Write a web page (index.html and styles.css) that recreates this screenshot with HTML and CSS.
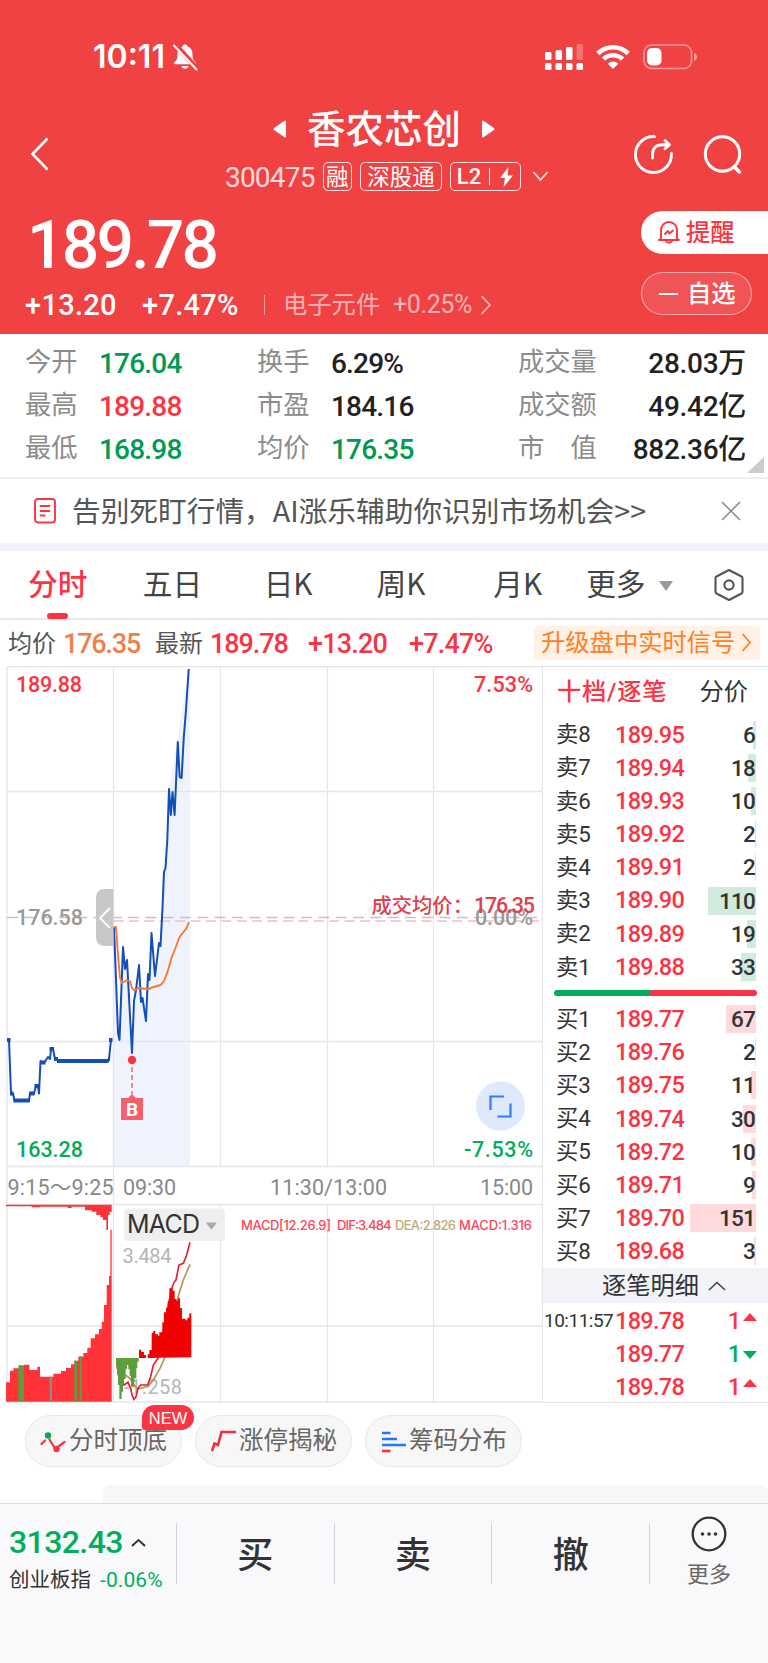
FILE: index.html
```html
<!DOCTYPE html>
<html lang="zh-CN">
<head>
  <meta charset="UTF-8" />
  <meta name="viewport" content="width=device-width, initial-scale=1.0"/>
  <title>香农芯创 300475</title>
  <link rel="stylesheet" href="styles.css">
</head>
<body>
  <header class="header">
    <div class="status">
      <span class="clock">10:11</span>
      <svg class="mute" width="28" height="28" viewBox="0 0 28 28">
        <path d="M14 1.500c1.500 0 2.300.8 2.500 2 3.300 1 5 3.800 5 7.500 0 5 1 6.500 3.200 8.500.7.700.3 1.800-.8 1.800H4.100c-1.100 0-1.500-1.100-.8-1.800C5.500 17.500 6.500 16 6.500 11c0-3.700 1.700-6.500 5-7.500.2-1.200 1-2 2.500-2zM10.500 23h7c-.3 1.800-1.600 2.800-3.500 2.800s-3.200-1-3.500-2.800z" fill="#fff"/>
        <path d="M4 1l22.500 25" stroke="#f04143" stroke-width="5"/>
        <path d="M3 2.500l22.500 24" stroke="#fff" stroke-width="2" stroke-linecap="round"/>
      </svg>
      <svg class="signal" width="38" height="26" viewBox="0 0 38 26" fill="#fff">
        <rect x="0" y="8" width="6.500" height="8" rx="1.500"/><rect x="10.500" y="6" width="6.500" height="10" rx="1.500"/>
        <rect x="21" y="3" width="6.500" height="13" rx="1.500"/><rect x="31.500" y="0" width="6.500" height="16" rx="1.500" opacity=".25"/>
        <rect x="0" y="19" width="6.500" height="7" rx="1.500"/><rect x="10.500" y="19" width="6.500" height="7" rx="1.500"/>
        <rect x="21" y="19" width="6.500" height="7" rx="1.500"/><rect x="31.500" y="19" width="6.500" height="7" rx="1.500"/>
      </svg>
      <svg class="wifi" width="34" height="26" viewBox="0 0 34 26" fill="none" stroke="#fff" stroke-width="4.600">
        <path d="M1.800 9.500a21.500 21.500 0 0 1 30.400 0M7.500 15.200a13.500 13.500 0 0 1 19 0"/>
        <path d="M17 25l-5.200-5.300a7.400 7.400 0 0 1 10.400 0z" fill="#fff" stroke="none"/>
      </svg>
      <svg class="battery" width="55" height="26" viewBox="0 0 55 26">
        <rect x="1" y="1" width="47.500" height="23.500" rx="7.500" fill="none" stroke="#fff" stroke-opacity=".45" stroke-width="1.600"/>
        <rect x="4" y="4" width="14.500" height="17.500" rx="5" fill="#fff"/>
        <path d="M51 9v8q3-1.200 3-4t-3-4z" fill="#fff" opacity=".5"/>
      </svg>
    </div>

    <div class="nav">
      <svg class="back" width="20" height="36" viewBox="0 0 20 36" fill="none" stroke="#fff" stroke-width="2.600"><path d="M17.500 2.500L2.500 18l15 15.500"/></svg>
      <div class="stock">
        <div class="stock-name">
          <svg width="14" height="20" viewBox="0 0 14 18" preserveAspectRatio="none"><path d="M13 2v14q-.5 1-1.500.4L1 9.800Q0 9 1 8.200L11.500 1.600q1-.6 1.500.4z" fill="#fff"/></svg>
          <h1>香农芯创</h1>
          <svg width="14" height="20" viewBox="0 0 14 18" preserveAspectRatio="none"><path d="M1 2v14q.5 1 1.500.4L13 9.800q1-.8 0-1.600L2.500 1.600Q1.500 1 1 2z" fill="#fff"/></svg>
        </div>
        <div class="stock-code">
          <span class="code">300475</span>
          <span class="tag">融</span>
          <span class="tag wide">深股通</span>
          <span class="tag l2">L2<i></i><svg width="15" height="20" viewBox="0 0 15 20"><path d="M9.500 0L1 11h5L4.500 20 14 8.500H8.500z" fill="#fff"/></svg></span>
          <svg class="down" width="17" height="11" viewBox="0 0 17 11" fill="none" stroke="#fff" stroke-opacity=".85" stroke-width="1.600"><path d="M1.500 1L8.500 9l7-8"/></svg>
        </div>
      </div>
      <div class="tools">
        <svg width="40" height="40" viewBox="0 0 40 40" fill="none" stroke="#fff" stroke-width="2.900" stroke-linecap="round" stroke-linejoin="round">
          <path d="M21.500 2.600A18 18 0 1 0 38.400 19.500"/><path d="M19.500 24v-3c0-7 3.500-10.300 10-10.300h5M32 6.500l4.500 4.200-4.500 4"/>
        </svg>
        <svg width="40" height="40" viewBox="0 0 40 40" fill="none" stroke="#fff" stroke-width="3" stroke-linecap="round">
          <circle cx="19.500" cy="20" r="17.200"/><path d="M31.500 33l4.800 5" stroke-width="3.600"/>
        </svg>
      </div>
    </div>

    <div class="quote">
      <div class="quote-left">
        <div class="price">189.78</div>
        <div class="change">
          <b>+13.20</b><b class="pct">+7.47%</b><i></i>
          <span class="sector">电子元件</span><span class="sector-pct">+0.25%</span>
          <svg width="12" height="20" viewBox="0 0 12 20" fill="none" stroke="#fff" stroke-opacity=".65" stroke-width="1.700"><path d="M1.500 1l8.500 9-8.500 9"/></svg>
        </div>
      </div>
      <div class="quote-right">
        <div class="remind">
          <svg width="24" height="25" viewBox="0 0 24 25" fill="none" stroke="#fb3444" stroke-width="1.900" stroke-linejoin="round" stroke-linecap="round">
            <path d="M4 18.500V10a8 8 0 0 1 16 0v8.500l2 1.500H2zM8.500 20.500q3.500 4.500 7 0"/><path d="M8 14l3-3 1.500 2.500 3.500-3"/>
          </svg>
          提醒
        </div>
        <div class="favor"><i></i>自选</div>
      </div>
    </div>
  </header>

  <section class="stats">
    <div class="stat"><span>今开</span><b class="green">176.04</b></div>
    <div class="stat"><span>换手</span><b>6.29%</b></div>
    <div class="stat last"><span>成交量</span><b>28.03万</b></div>
    <div class="stat"><span>最高</span><b class="red">189.88</b></div>
    <div class="stat"><span>市盈</span><b>184.16</b></div>
    <div class="stat last"><span>成交额</span><b>49.42亿</b></div>
    <div class="stat"><span>最低</span><b class="green">168.98</b></div>
    <div class="stat"><span>均价</span><b class="green">176.35</b></div>
    <div class="stat last"><span>市　值</span><b>882.36亿</b></div>
  </section>

  <section class="notice">
    <svg width="22" height="26" viewBox="0 0 22 26" fill="none" stroke="#fb3444" stroke-width="1.900" stroke-linecap="round">
      <rect x="1" y="1" width="20" height="23.500" rx="3"/><path d="M6.500 8h9M6.500 13h9M6.500 17.500h4"/>
    </svg>
    <p>告别死盯行情，AI涨乐辅助你识别市场机会&gt;&gt;</p>
    <svg class="close" width="20" height="20" viewBox="0 0 20 20" stroke="#888" stroke-width="1.500"><path d="M1 1l18 18M19 1L1 19"/></svg>
  </section>

  <nav class="tabs">
    <a class="active">分时</a>
    <a>五日</a>
    <a>日K</a>
    <a>周K</a>
    <a>月K</a>
    <a class="more">更多<i></i></a>
    <svg width="32" height="34" viewBox="0 0 32 34" fill="none" stroke="#555" stroke-width="2.100" stroke-linejoin="round">
      <path d="M16 2l12.500 6.500q1 .6 1 1.700v13.600q0 1.100-1 1.700L16 32 3.500 25.500q-1-.6-1-1.700V10.200q0-1.100 1-1.700z"/><circle cx="16" cy="17" r="4.600"/>
    </svg>
  </nav>

  <section class="info">
    <span>均价</span><b class="orange">176.35</b>
    <span class="latest">最新</span><b>189.78</b><b class="diff">+13.20</b><b class="diff">+7.47%</b>
    <a class="upgrade">升级盘中实时信号<svg width="11" height="19" viewBox="0 0 11 19" fill="none" stroke="#ff8022" stroke-width="1.800"><path d="M1.500 1l7.500 8.500L1.500 18"/></svg></a>
  </section>

  <main class="market">
    <svg class="chart" width="543" height="737" viewBox="0 666 543 737">
      <path class="area" d="M113.500 927L118 1033l1.500 7 3.500-93 2 22 2-9 5 93 2-52 2-11 3-25 2 37 1.500-4 3.500 23 2-47 1.500 6 2-47 3.500 43 4-33 1.500 2 3-65L164 872l1.500-4 1.800-28 1.700-51 20-120h1v497H113.500z"/>
      <!-- grid -->
      <g class="grid">
        <path d="M7 666.500h536M7 791.500h535M7 1041.500h535M7 1166.500h535M7 1204.500h535M7 1326h535M7 1402h536"/>
        <path d="M7 666v736M113.500 666v736M220.500 666v500M327.500 666v500M433.500 666v500M542.500 666v736M220.500 1204v198M327.500 1204v198M433.500 1204v198"/>
      </g>
      <path d="M7 917.500h535" stroke="#b9c6d6" stroke-width="1.300" stroke-dasharray="11 6.300"/>
      <path d="M113.500 921h428" stroke="#fbc9d0" stroke-width="1.800" stroke-dasharray="10 5.400"/>

      <text class="up" x="16" y="692.400" textLength="66">189.88</text>
      <text class="up" x="474" y="692.400" textLength="59">7.53%</text>
      <text class="flat" x="16" y="925.300" textLength="67">176.58</text>
      <text class="flat" x="475" y="925.300" textLength="58">0.00%</text>
      <text class="down" x="16" y="1157" textLength="67">163.28</text>
      <text class="down" x="464" y="1157" textLength="69">-7.53%</text>
      <text class="avg" x="371.500" y="913">成交均价：</text>
      <text class="avg num" x="474" y="912.500" textLength="61">176.35</text>

      <!-- call auction + minute line -->
      <path class="line" d="M7 1040h2l2 53.500h2l1.500 7H29l1-7h4l2-7.500h2l1 7.500 1.500-32.500 3.500 2 2-3 2-3 2 2 1-10h2l2 10 3 2h50l1-2 2-19"/>
      <path class="line dots" d="M13.500 1100.500H30M57 1061h51.500M49.500 1049h4.500M29 1093.500h5.500M34.500 1086h4.500M40 1062.500h5.500M7 1040h3.500M10 1093.500h3.500M54 1059h4M108 1059h2M109 1040h3.500"/>
      <path class="line" d="M114 927l4 106 1.500 7 3.500-93 2 22 2-9 5 93 2-52 2-11 3-25 2 37 1.500-4 3.500 23 2-47 1.500 6 2-47 3.500 43 4-33 1.500 3 2-38L164 872l1.500-4 1.800-28 1.700-51 1.800 26 1.700-23 2.100 23 3.200-73 1.800 35 2 1 2.200-41 2.200-27 2.700-41"/>
      <path class="avg-line" d="M114 927h2l2 28 2 23 2 5 5-3 3 1.500 2 6.500 2.500 2.500 4-2.500 10 1 5-2 7-2 3-3 4-10 4-14 4-10 4-11 4-5 3-4 2.500-6"/>

      <!-- buy marker -->
      <circle cx="132" cy="1060" r="4.200" fill="#fb3444"/>
      <path d="M132 1067v27" stroke="#f5606d" stroke-width="1.500" stroke-dasharray="5 3"/>
      <path d="M121 1098h7l4-4 4 4h7v22h-22z" fill="#f5606d"/>
      <text class="mark" x="132" y="1116">B</text>

      <path d="M113.500 889H105q-9 0-9 9v39q0 9 9 9h8.500z" fill="#c8c8c8"/>
      <path d="M110 908l-10 10 10 10" fill="none" stroke="#fff" stroke-width="1.800"/>

      <circle cx="500.500" cy="1106" r="24.500" fill="#dee9fd"/>
      <path d="M490.500 1110v-13.500H504M510.500 1103.500v13H497.500" fill="none" stroke="#2f7cff" stroke-width="2.200"/>

      <text class="axis" x="7.500" y="1194.500" textLength="106">9:15～9:25</text>
      <text class="axis" x="123" y="1194.500" textLength="53">09:30</text>
      <text class="axis" x="270" y="1194.500" textLength="117">11:30/13:00</text>
      <text class="axis" x="480" y="1194.500" textLength="53">15:00</text>

      <!-- auction volume -->
      <g transform="translate(0 1195) scale(.33333)">
        <path fill="#ff3338" d="M18 620V562H30V527H40V520H57V514H72V509H88V525H112V515H120V545H160V536H183V528H198V519H213V508H223V497H235V485H250V474H262V458H272V430H285V418H297V402H305V380H312V330H320V270H327V243H331V104H335V620z"/>
        <path fill="#ff3338" d="M18 29h317v22h-6v9h-5v45h-5V75h-10v-8h-8v-7h-12V50h-14v-4h-20V35h-40v4h-12v-4H120v2H95v-3H18z"/>
        <path fill="#5d9e3c" d="M55 511h17v109H55zM223 497h8v123h-8zM239 484h7v136h-7zM57 30h15v4H57zM238 30h8v4h-8z"/>
        <path fill="#8a8a8a" d="M149 545h7v75h-7z"/>
      </g>

      <rect x="124" y="1208.500" width="101" height="32.500" rx="4" fill="#efefef"/>
      <text class="macd" x="127" y="1232.500" textLength="73">MACD</text>
      <path d="M207 1222.500h9q1 0 .3 1L212 1229q-.5.600-1 0l-4.600-5.500q-.5-1 .6-1z" fill="#aaa"/>
      <text class="scale" x="122.500" y="1263" textLength="49">3.484</text>
      <text class="scale" x="124" y="1394" textLength="58">-1.258</text>
      <g class="legend">
        <text x="241" y="1230" textLength="90">MACD[12.26.9]</text>
        <text x="337" y="1230" textLength="54.500">DIF:3.484</text>
        <text class="dea" x="395" y="1230" textLength="61">DEA:2.826</text>
        <text x="459" y="1230" textLength="73">MACD:1.316</text>
      </g>

      <!-- macd -->
      <g transform="translate(0 1195) scale(.33333)">
        <path fill="none" stroke="#b4935a" stroke-width="5" d="M376 540l14 10 10 18 12 14 33-8 15-19 20-35 14-31 39-179 17-55 20-47"/>
        <path fill="none" stroke="#e2222e" stroke-width="5" d="M351 512l9 55 12 3 12-8 8 18 4 20 6 13 6-8 6-25 8-10h21l9-25 8-35 14-20 40-205 8-23 6-7 9-45 13-5 10-25 10-38"/>
        <path fill="#5d9e3c" d="M348 489v25h3v26h3v30h4v42h7v-22h4v-22h3v-16h5v-30h4v-12h4v13h4v20h4v32h10v-25h6v-30h3v-20h4v-11z"/>
        <path fill="#ee0202" d="M417 489v-25h7v7h8v9h6v9h5v-11h5v-13h7v-52h5v-5h6v10h8v4h4v-10h9v-30h5v-30h6v-14h5v-20h5v-38h10v7h6v25h5v5h5v-7h6v29h6v32h11v5h5v-8h6v-13h6v132z"/>
      </g>
    </svg>

    <aside class="book">
      <div class="book-head"><b>十档/逐笔</b><span>分价</span></div>
      <div class="orders sell">
        <div class="order"><span>卖8</span><b>189.95</b><em><i style="width:3px"></i>6</em></div>
        <div class="order"><span>卖7</span><b>189.94</b><em><i style="width:8px"></i>18</em></div>
        <div class="order"><span>卖6</span><b>189.93</b><em><i style="width:5px"></i>10</em></div>
        <div class="order"><span>卖5</span><b>189.92</b><em><i style="width:1px"></i>2</em></div>
        <div class="order"><span>卖4</span><b>189.91</b><em><i style="width:1px"></i>2</em></div>
        <div class="order"><span>卖3</span><b>189.90</b><em><i style="width:48px"></i>110</em></div>
        <div class="order"><span>卖2</span><b>189.89</b><em><i style="width:9px"></i>19</em></div>
        <div class="order"><span>卖1</span><b>189.88</b><em><i style="width:15px"></i>33</em></div>
      </div>
      <div class="ratio"></div>
      <div class="orders buy">
        <div class="order"><span>买1</span><b>189.77</b><em><i style="width:30px"></i>67</em></div>
        <div class="order"><span>买2</span><b>189.76</b><em><i style="width:1px"></i>2</em></div>
        <div class="order"><span>买3</span><b>189.75</b><em><i style="width:5px"></i>11</em></div>
        <div class="order"><span>买4</span><b>189.74</b><em><i style="width:13px"></i>30</em></div>
        <div class="order"><span>买5</span><b>189.72</b><em><i style="width:5px"></i>10</em></div>
        <div class="order"><span>买6</span><b>189.71</b><em><i style="width:4px"></i>9</em></div>
        <div class="order"><span>买7</span><b>189.70</b><em><i style="width:66px"></i>151</em></div>
        <div class="order"><span>买8</span><b>189.68</b><em><i style="width:2px"></i>3</em></div>
      </div>
      <div class="ticks-head">逐笔明细<svg width="18" height="10" viewBox="0 0 18 10" fill="none" stroke="#444" stroke-width="1.600"><path d="M1 9l8-7.500L17 9"/></svg></div>
      <div class="tick"><time>10:11:57</time><b>189.78</b><em>1</em><i></i></div>
      <div class="tick fall"><time></time><b>189.77</b><em>1</em><i></i></div>
      <div class="tick"><time></time><b>189.78</b><em>1</em><i></i></div>
    </aside>
  </main>

  <section class="chips">
    <a class="chip">
      <svg width="27" height="24" viewBox="0 0 27 24" fill="none" stroke="#fb3444" stroke-width="2.300" stroke-linecap="round"><path d="M1.500 15l3.500-3.500M9.500 10.500l5 8M19 17l5.500-4"/><circle cx="8" cy="6.500" r="3.200" fill="#0aa858" stroke="none"/><circle cx="16.500" cy="20" r="3.200" fill="#fb3444" stroke="none"/></svg>
      分时顶底
      <span class="new">NEW</span>
    </a>
    <a class="chip">
      <svg width="27" height="24" viewBox="0 0 27 24" fill="none" stroke="#f0303f" stroke-width="2.600"><path d="M2 22l2.500-7.500L8 16l3.500-13H26"/></svg>
      涨停揭秘
    </a>
    <a class="chip">
      <svg width="27" height="24" viewBox="0 0 27 24" stroke="#2476ff" stroke-width="2.700"><path d="M2 4h8.500M2 10h15M2 16h24"/><path d="M2 22h8.500" stroke="#fb3444"/></svg>
      筹码分布
    </a>
  </section>
  <div class="peek"></div>

  <footer class="bar">
    <div class="index">
      <div class="index-value">3132.43<svg width="15" height="9" viewBox="0 0 15 9" fill="none" stroke="#333" stroke-width="2"><path d="M1 8l6.500-6L14 8"/></svg></div>
      <div class="index-name">创业板指<span>-0.06%</span></div>
    </div>
    <a class="trade">买</a>
    <a class="trade">卖</a>
    <a class="trade">撤</a>
    <a class="more-btn">
      <svg width="36" height="36" viewBox="0 0 36 36"><circle cx="18" cy="18" r="16.300" fill="none" stroke="#333" stroke-width="2.300"/><g fill="#333"><circle cx="11.500" cy="18" r="1.800"/><circle cx="18" cy="18" r="1.800"/><circle cx="24.500" cy="18" r="1.800"/></g></svg>
      更多
    </a>
  </footer>
</body>
</html>
```

FILE: styles.css
```css
* {
  margin: 0;
  padding: 0;
  box-sizing: border-box;
}

body {
  width: 768px;
  height: 1663px;
  overflow: hidden;
  background: #fff;
  color: #333;
  font-family: Roboto, "Noto Sans CJK SC", sans-serif;
  line-height: 1.2;
}

svg {
  display: block;
  flex: none;
}

i, em {
  font-style: normal;
}

b {
  font-weight: 500;
}

.red { color: #fb3444; }
.green { color: #009a50; }
.orange { color: #f0804a; }

/* header */
.header {
  height: 334px;
  background: #f04143;
  color: #fff;
}

.status {
  display: flex;
  align-items: center;
  height: 102px;
  padding: 12px 70px 0 93px;
}

.clock {
  padding-top: 1px;
  font-family: Inter, sans-serif;
  font-size: 32px;
  font-weight: 600;
}

.mute { margin: 0 auto 0 6px; }
.wifi { margin: 0 13px; }

.nav {
  display: grid;
  grid-template-columns: 225px 324px 1fr;
  height: 96px;
}

.back { margin: 34px 0 0 30px; }

.stock-name {
  display: flex;
  align-items: center;
  justify-content: center;
  gap: 20px;
  height: 54px;
  padding-right: 6px;
}

h1 {
  padding-top: 1px;
  font-size: 38.5px;
  font-weight: 500;
  line-height: 54px;
}

.stock-code {
  display: flex;
  align-items: center;
  height: 41px;
  white-space: nowrap;
}

.code {
  padding-top: 2px;
  width: 99px;
  font-size: 28px;
  letter-spacing: -0.8px;
  opacity: .8;
}

.tag {
  display: flex;
  align-items: center;
  justify-content: center;
  width: 30px;
  height: 29px;
  margin-right: 8px;
  border: 1.5px solid rgba(255, 255, 255, .85);
  border-radius: 5px;
  font-size: 22.5px;
  line-height: 26px;
}

.tag.wide { width: 83px; }

.tag.l2 {
  width: 72px;
  margin-right: 11px;
  font-size: 22px;
  font-weight: 500;
}

.l2 i {
  width: 1px;
  height: 17px;
  margin: 0 9px 0 8px;
  background: #fff;
}

.tools {
  display: flex;
  gap: 30px;
  padding: 32px 0 0 84px;
}

.quote {
  display: flex;
  justify-content: space-between;
}

.quote-left { padding-left: 25px; }

.price {
  height: 91px;
  padding: 1px 0 0 2px;
  font-size: 66px;
  font-weight: 500;
  line-height: 93px;
  letter-spacing: -2.8px;
}

.change {
  display: flex;
  align-items: center;
  height: 32px;
  font-size: 29px;
  white-space: nowrap;
}

.change b {
  width: 117px;
  letter-spacing: 0.3px;
}

.change .pct { width: 122px; }

.change i {
  width: 1px;
  height: 20px;
  margin-right: 18px;
  background: rgba(255, 255, 255, .5);
}

.sector {
  width: 110px;
  font-size: 24.3px;
  opacity: .6;
}

.sector-pct {
  width: 87px;
  font-size: 25px;
  letter-spacing: -0.4px;
  opacity: .6;
}

.quote-right {
  width: 127px;
  padding-top: 13px;
}

.remind, .favor {
  display: flex;
  align-items: center;
  height: 43px;
  font-size: 24.3px;
  font-weight: 500;
}

.remind {
  padding-left: 16px;
  gap: 5px;
  border-radius: 22px 0 0 22px;
  background: #fff;
  color: #fb3444;
}

.favor {
  width: 111px;
  margin-top: 18px;
  padding-left: 17px;
  gap: 9px;
  border: 1px solid rgba(255, 255, 255, .5);
  border-radius: 22px;
  background: rgba(255, 255, 255, .1);
}

.favor i {
  width: 19px;
  height: 2px;
  background: #fff;
}

/* day stats */
.stats {
  position: relative;
  display: grid;
  grid-template-columns: 232px 261px 228px;
  grid-auto-rows: 43px;
  height: 145px;
  padding: 8px 22px 0 25px;
  border-bottom: 2px solid #efefef;
}

.stats::after {
  content: "";
  position: absolute;
  right: 4px;
  bottom: 4px;
  border-left: 17px solid transparent;
  border-bottom: 16px solid #ccc;
}

.stat {
  display: flex;
  align-items: center;
  color: #222;
}

.stat span {
  width: 74px;
  color: #8c8c8c;
  font-size: 26.3px;
  line-height: 36px;
  padding-bottom: 4px;
}

.stat b {
  padding-top: 1px;
  font-size: 28px;
  line-height: 36px;
  letter-spacing: -0.8px;
  white-space: nowrap;
}

.stat .green { color: #009a50; }
.stat .red { color: #fb3444; }
.stat.last { justify-content: space-between; }
.stat.last span { width: 84px; }
.stat.last b { letter-spacing: -0.3px; }

.notice {
  display: flex;
  align-items: center;
  height: 72px;
  padding: 0 27px 0 34px;
  border-bottom: 8px solid #f2f3f8;
  color: #555;
}

.notice p {
  margin: -2px 0 0 16px;
  font-family: "Noto Sans CJK SC", sans-serif;
  font-size: 28.7px;
  line-height: 40px;
  white-space: nowrap;
}

.close { margin: -1px 0 0 auto; }

/* chart tabs */
.tabs {
  display: flex;
  align-items: center;
  height: 69px;
  padding: 0 23px 0 28px;
  border-bottom: 2px solid #e8e8e8;
  font-family: "Noto Sans CJK SC", sans-serif;
  font-size: 29.7px;
  color: #444;
}

.tabs a {
  position: relative;
  width: 115px;
  height: 66px;
  line-height: 62px;
  white-space: nowrap;
}

.tabs a:nth-child(2) { width: 121px; }
.tabs a:nth-child(3) { width: 113px; }
.tabs a:nth-child(4) { width: 117px; }
.tabs a:nth-child(5) { width: 93px; }

.tabs .active {
  color: #fb3444;
  font-weight: 500;
}

.tabs .active::after {
  content: "";
  position: absolute;
  left: 19px;
  bottom: -1px;
  width: 21px;
  height: 6px;
  border-radius: 3px;
  background: #fb3444;
}

.tabs .more {
  display: flex;
  width: 127px;
}

.more i {
  margin: 29px 0 0 13px;
  height: 10px;
  border: 7.5px solid transparent;
  border-top: 10px solid #999;
  border-bottom: 0;
}

.info {
  display: flex;
  align-items: center;
  height: 46px;
  padding: 2px 8px 0 8px;
  color: #fb3444;
  font-size: 27px;
  letter-spacing: -1.1px;
  white-space: nowrap;
}

.info span {
  width: 55px;
  color: #555;
  font-size: 24px;
  letter-spacing: 0;
}

.info .latest { margin-left: 15px; }
.info b { width: 77px; }
.info .orange { letter-spacing: -1.2px; }

.info .diff {
  margin-left: 21px;
  width: 80px;
  letter-spacing: -0.8px;
}

.upgrade {
  display: flex;
  align-items: center;
  gap: 6px;
  width: 226px;
  height: 34px;
  margin: -3px 0 0 auto;
  padding-left: 7px;
  border-radius: 4px;
  background: #fff1e6;
  color: #ff8022;
  font-size: 24.3px;
  letter-spacing: 0;
}

/* minute chart */
.market {
  display: flex;
  height: 737px;
}

.chart text {
  font-size: 21.5px;
  fill: #999;
}

.grid path {
  stroke: #e6e6e6;
  stroke-width: 1.3;
}

.area { fill: #eff3fe; }

.line {
  fill: none;
  stroke: #134fb8;
  stroke-width: 2;
  stroke-linejoin: round;
}

.line.dots { stroke-width: 4; }

.avg-line {
  fill: none;
  stroke: #fb7537;
  stroke-width: 1.9;
  stroke-linejoin: round;
}

.chart .flat { font-weight: 500; }
.chart .up { fill: #fb3444; font-weight: 500; }
.chart .down { fill: #00ae5b; font-weight: 500; }
.chart .axis { fill: #888; }
.chart .avg { fill: #e0404a; font-size: 20.3px; font-weight: 500; }
.chart .avg.num { font-size: 21.5px; }

.chart .mark {
  fill: #fff;
  font-size: 19px;
  font-weight: 700;
  text-anchor: middle;
}

.chart .macd {
  fill: #333;
  font-family: Inter, sans-serif;
  font-size: 25px;
}

.chart .scale {
  fill: #b5b5b5;
  font-size: 20px;
}

.chart .legend text {
  font-family: Inter, sans-serif;
  font-size: 13px;
  font-weight: 500;
  fill: #f9485a;
}

.chart .legend .dea { fill: #c1aa78; }

/* order book */
.book {
  flex: 1;
  border-top: 1px solid #e4e4e4;
  border-bottom: 1px solid #e4e4e4;
}

.book-head {
  display: flex;
  justify-content: space-between;
  height: 51px;
  padding: 0 20px 0 14px;
  font-size: 24.3px;
  line-height: 50px;
}

.book-head b {
  color: #fb3444;
  letter-spacing: 0.7px;
}

.order {
  display: flex;
  align-items: center;
  height: 33.2px;
  padding: 0 13px 0 13px;
}

.order span {
  width: 59px;
  font-size: 22.3px;
}

.order b, .tick b {
  color: #fb3444;
  font-size: 23.5px;
  letter-spacing: -0.7px;
}

.order em {
  position: relative;
  margin-left: auto;
  font-size: 22.5px;
  font-weight: 500;
  line-height: 28px;
  letter-spacing: -0.8px;
}

.order i {
  position: absolute;
  top: 0;
  right: -1px;
  z-index: -1;
  height: 28px;
}

.sell i { background: #d0ebdd; }
.buy i { background: #ffd9dc; }

.ratio {
  height: 6px;
  margin: 6px 11px 7px;
  border-radius: 3px;
  background: linear-gradient(120deg, #00ae5b 47%, #fb3444 47.5%);
}

.ticks-head {
  display: flex;
  align-items: center;
  justify-content: center;
  gap: 9px;
  height: 35px;
  padding-left: 17px;
  background: #f2f3f8;
  font-size: 24.3px;
}

.tick {
  display: flex;
  align-items: center;
  height: 33.2px;
  padding: 3px 11px 0 1px;
}

.tick time {
  width: 71px;
  font-size: 19px;
  letter-spacing: -0.5px;
  white-space: nowrap;
}

.tick em {
  margin-left: auto;
  color: #fb3444;
  font-size: 23.5px;
  font-weight: 500;
}

.tick i {
  margin: 0 0 8px 2px;
  border: 7.5px solid transparent;
  border-top: 0;
  border-bottom: 8px solid #fb3444;
}

.tick.fall em { color: #00ae5b; }

.tick.fall i {
  margin: 2px 0 0 2px;
  border-top: 8px solid #00ae5b;
  border-bottom: 0;
}

/* shortcuts */
.chips {
  display: flex;
  gap: 13px;
  padding: 12px 25px 0;
}

.chip {
  position: relative;
  display: flex;
  align-items: center;
  gap: 2px;
  width: 157px;
  height: 52px;
  padding-left: 14px;
  border: 1px solid #e8e8e8;
  border-radius: 26px;
  background: #f7f7f7;
  color: #666;
  font-size: 24.5px;
  white-space: nowrap;
}

.new {
  position: absolute;
  top: -11px;
  right: -13px;
  width: 52px;
  height: 25px;
  border-radius: 13px 13px 13px 3px;
  background: #fb3444;
  color: #fff;
  font-family: "Liberation Sans", sans-serif;
  font-size: 16.5px;
  line-height: 26px;
  text-align: center;
}

.peek {
  height: 18px;
  margin: 18px 0 0 103px;
  border-radius: 8px 8px 0 0;
  background: #f7f7f7;
}

/* bottom bar */
.bar {
  display: flex;
  height: 160px;
  padding-top: 19px;
  border-top: 1.5px solid #dcdcde;
  background: #f9f9fc;
}

.index {
  width: 176px;
  height: 62px;
  padding-left: 9px;
}

.index-value {
  display: flex;
  align-items: center;
  gap: 8px;
  height: 38px;
  color: #00ae5b;
  font-size: 32px;
  font-weight: 500;
  letter-spacing: -0.6px;
}

.index-name {
  margin-top: 4px;
  font-size: 20.5px;
  line-height: 30px;
  white-space: nowrap;
}

.index-name span {
  margin-left: 9px;
  color: #00ae5b;
  font-size: 21px;
  letter-spacing: 0.1px;
}

.trade {
  width: 157.7px;
  height: 61px;
  border-left: 1.5px solid #d4d4d8;
  font-size: 36px;
  font-weight: 500;
  line-height: 66px;
  text-align: center;
}

.more-btn {
  display: flex;
  flex-direction: column;
  align-items: center;
  flex: 1;
  height: 61px;
  border-left: 1.5px solid #d4d4d8;
  color: #666;
  font-size: 22px;
  line-height: 32px;
}

.more-btn svg {
  margin: -7px 0 7px;
}
```
